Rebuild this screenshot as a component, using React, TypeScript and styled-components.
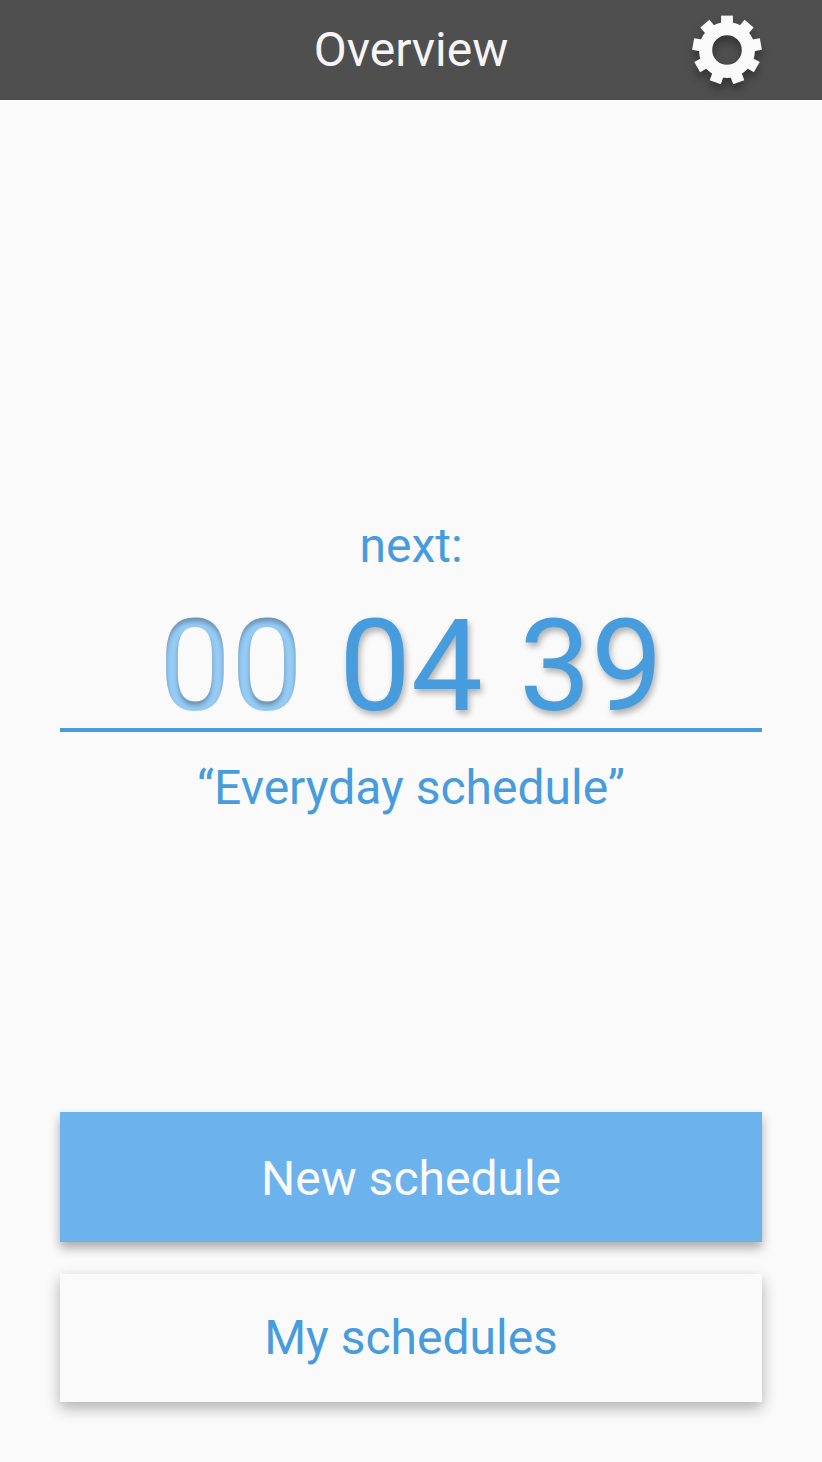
import React from "react";
import styled, { createGlobalStyle } from "styled-components";

const Global = createGlobalStyle`
  * { box-sizing: border-box; }
  body { margin: 0; background: #fafafa; font-family: Roboto, sans-serif; }
`;

const Screen = styled.main`
  display: flex;
  flex-direction: column;
  height: 1462px;
  background: #fafafa;
`;

const Header = styled.header`
  display: grid;
  grid-template-columns: 1fr auto 1fr;
  align-items: center;
  height: 100px;
  padding: 0 52px;
  background: #4f4f4f;
`;

const Title = styled.h1`
  grid-column: 2;
  margin: 0;
  font-size: 48px;
  font-weight: 400;
  line-height: 56px;
  color: #f5f5f5;
`;

const SettingsButton = styled.button`
  justify-self: end;
  width: 86px;
  height: 100px;
  padding: 0;
  border: 0;
  background: none;
`;

const GearIcon = styled.svg`
  display: block;
  overflow: hidden;
`;

const Gear = styled.g`
  filter: drop-shadow(0 6px 4px rgba(0, 0, 0, 0.33));
`;

const FilterDefs = styled.svg`
  display: block;
  width: 0;
  height: 0;
`;

const Next = styled.section`
  display: flex;
  flex-direction: column;
  align-items: center;
  margin: 418px 60px 0;
  color: #479cde;
`;

const Label = styled.p`
  margin: 0;
  font-size: 48px;
  line-height: 56px;
`;

const Countdown = styled.div`
  display: flex;
  justify-content: center;
  gap: 36px;
  width: 100%;
  height: 158px;
  margin-bottom: 28px;
  padding-top: 17px;
  border-bottom: 4px solid #479cde;
  font-size: 128px;
  line-height: 150px;
`;

const Digits = styled.span<{ $faded?: boolean }>`
  width: 144px;
  height: 150px;
  color: ${(p) => (p.$faded ? "#95cbf5" : "#479cde")};
  filter: ${(p) => (p.$faded ? "url(#inset-shadow)" : "none")};
  text-shadow: ${(p) => (p.$faded ? "none" : "2px 4px 6px rgba(0, 0, 0, 0.3)")};
`;

const Actions = styled.nav`
  display: flex;
  flex-direction: column;
  gap: 32px;
  margin: auto 60px 60px;
`;

const Action = styled.button<{ $primary?: boolean }>`
  height: ${(p) => (p.$primary ? 130 : 128)}px;
  padding: ${(p) => (p.$primary ? 3 : 0)}px 0 0;
  border: 0;
  background: ${(p) => (p.$primary ? "#6cb2ec" : "#fafafa")};
  color: ${(p) => (p.$primary ? "#fafafa" : "#479cde")};
  font: 400 48px/56px Roboto, sans-serif;
  box-shadow: ${(p) => (p.$primary ? "0 6px 10px rgba(0, 0, 0, 0.32)" : "0 6px 14px rgba(0, 0, 0, 0.3)")};
`;

const teeth = Array.from({ length: 9 }, (_, i) => i * 40);

export default function App() {
  return (
    <>
      <Global />
      <FilterDefs aria-hidden="true">
        <filter id="inset-shadow" x="-5%" y="-5%" width="110%" height="110%" colorInterpolationFilters="sRGB">
          <feGaussianBlur in="SourceAlpha" stdDeviation="2" />
          <feOffset dy="4" result="moved" />
          <feFlood floodColor="#000" floodOpacity="0.27" result="ink" />
          <feComposite in="ink" in2="moved" operator="out" />
          <feComposite in2="SourceAlpha" operator="in" result="inner" />
          <feMerge>
            <feMergeNode in="SourceGraphic" />
            <feMergeNode in="inner" />
          </feMerge>
        </filter>
      </FilterDefs>
      <Screen>
        <Header>
          <Title>Overview</Title>
          <SettingsButton aria-label="Settings">
            <GearIcon width="86" height="100" viewBox="-43 -50 86 100">
              <Gear>
                <circle r="21.4" fill="none" stroke="#fafafa" strokeWidth="13.2" />
                {teeth.map((a) => (
                  <path key={a} d="M-5.9-25V-34.4H5.9V-25Z" fill="#fafafa" transform={`rotate(${a})`} />
                ))}
              </Gear>
            </GearIcon>
          </SettingsButton>
        </Header>
        <Next>
          <Label>next:</Label>
          <Countdown>
            <Digits $faded>00</Digits>
            <Digits>04</Digits>
            <Digits>39</Digits>
          </Countdown>
          <Label>“Everyday schedule”</Label>
        </Next>
        <Actions>
          <Action $primary>New schedule</Action>
          <Action>My schedules</Action>
        </Actions>
      </Screen>
    </>
  );
}
